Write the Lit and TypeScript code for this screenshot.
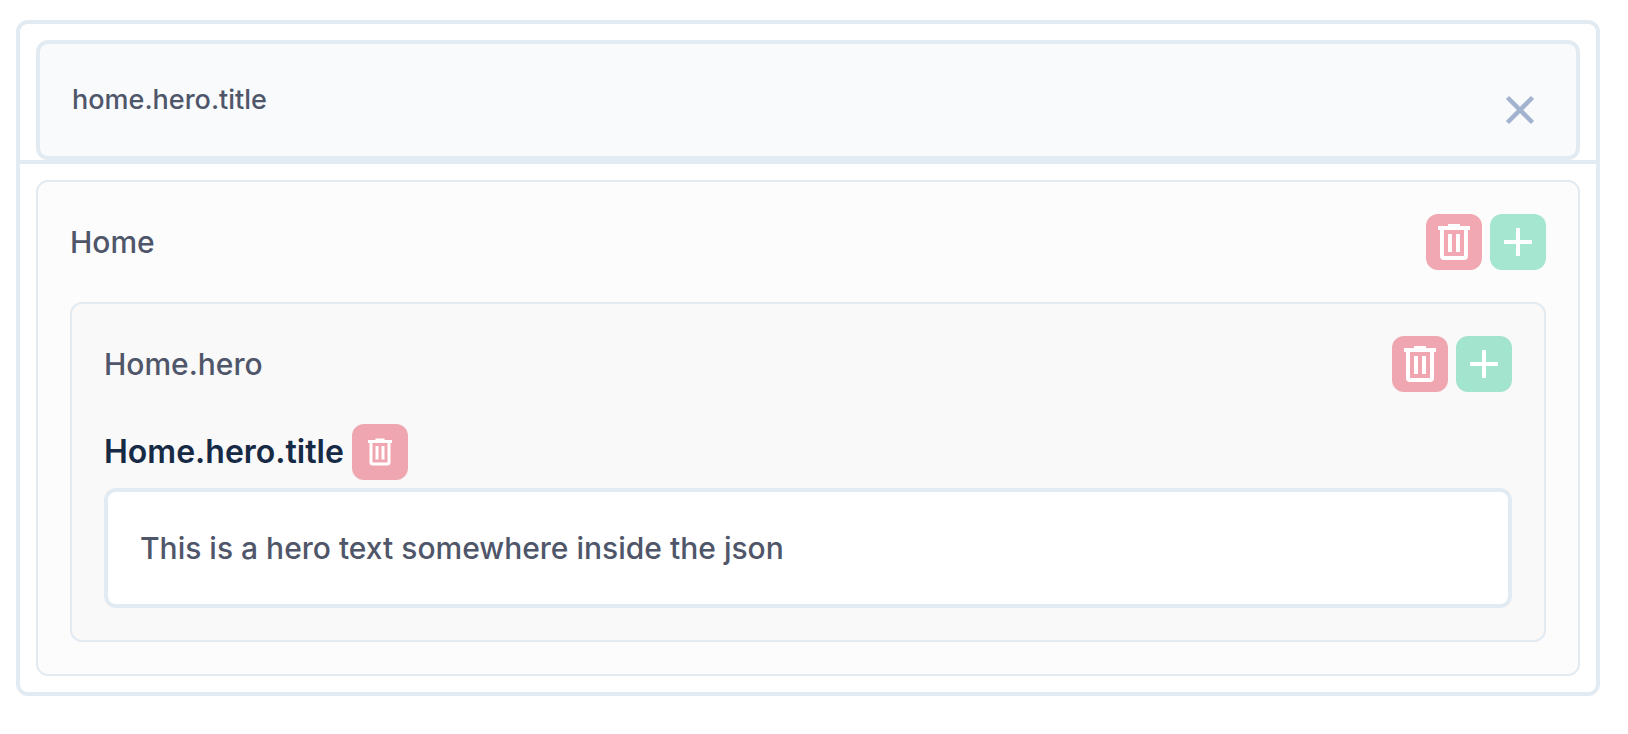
import { LitElement, html, svg, css, nothing } from "lit";
import { customElement, property, state } from "lit/decorators.js";

const trashShape = svg`
  <path fill-rule="evenodd" d="M22 10h12v2h10v4h-2v26a4 4 0 0 1-4 4h-20a4 4 0 0 1-4-4v-26h-2v-4h10zM18 16v26h20v-26z" />
  <path d="M22 20h4v18h-4zM30 20h4v18h-4z" />
`;

@customElement("icon-button")
class IconButton extends LitElement {
  @property() kind = "delete";
  @property() label = "";
  @property({ type: Boolean }) small = false;

  static styles = css`
    :host {
      display: block;
      flex: none;
    }
    .button {
      display: block;
      width: 56px;
      height: 56px;
      padding: 0;
      border: 0;
      border-radius: 12px;
      cursor: pointer;
      background: rgba(232, 84, 104, 0.5);
    }
    .add {
      background: rgba(75, 207, 164, 0.5);
    }
    .glyph {
      display: block;
      width: 56px;
      height: 56px;
      fill: #fff;
    }
  `;

  render() {
    const add = this.kind === "add";
    return html`<button class="button ${add ? "add" : ""}" type="button" aria-label=${this.label}>
      <svg class="glyph" viewBox="0 0 56 56" aria-hidden="true">
        ${add
          ? svg`<path d="M26 14h4v12h12v4h-12v12h-4v-12h-12v-4h12z" />`
          : this.small
            ? svg`<g transform="translate(7 7) scale(0.75)">${trashShape}</g>`
            : trashShape}
      </svg>
    </button>`;
  }
}

interface Leaf {
  path: string;
  value: string;
}

interface Group {
  path: string;
  groups: Group[];
  leaves: Leaf[];
}

const tree: Group = {
  path: "Home",
  leaves: [],
  groups: [
    {
      path: "Home.hero",
      groups: [],
      leaves: [{ path: "Home.hero.title", value: "This is a hero text somewhere inside the json" }],
    },
  ],
};

@customElement("app-root")
class AppRoot extends LitElement {
  @state() query = "home.hero.title";

  static styles = css`
    :host {
      display: block;
      padding: 20px 28px 20px 16px;
      font-family: Inter, sans-serif;
      font-size: 30px;
      line-height: 40px;
      font-weight: 500;
      color: #4f566a;
    }
    .panel {
      border: 4px solid #e2eaf2;
      border-radius: 12px;
      background: #fff;
    }
    .search {
      position: relative;
      padding: 16px 16px 0;
      border-bottom: 4px solid #e2eaf2;
    }
    .field {
      display: block;
      box-sizing: border-box;
      width: 100%;
      padding: 36px 32px;
      border: 4px solid #e2eaf2;
      border-radius: 12px;
      background: #fff;
      font: inherit;
      color: inherit;
      outline: none;
    }
    .query {
      padding-right: 96px;
      background: #f9fafc;
      font-size: 27px;
    }
    .clear {
      position: absolute;
      right: 48px;
      bottom: 22px;
      width: 56px;
      height: 56px;
      padding: 0;
      border: 0;
      background: none;
      cursor: pointer;
    }
    .cross {
      display: block;
      fill: none;
      stroke: #a3b3cf;
      stroke-width: 4.5;
    }
    .tree {
      padding: 16px;
    }
    .group {
      display: flex;
      flex-direction: column;
      gap: 32px;
      padding: 32px;
      border: 2px solid #e2eaf2;
      border-radius: 12px;
      background: rgba(0, 0, 0, 0.01);
    }
    .row {
      display: flex;
      align-items: center;
      gap: 8px;
    }
    .name {
      flex: 1;
      min-width: 0;
    }
    .leaf {
      display: flex;
      flex-direction: column;
      gap: 8px;
    }
    .label {
      font-weight: 600;
      font-size: 32px;
      color: #172a45;
    }
  `;

  renderLeaf(leaf: Leaf) {
    return html`<div class="leaf">
      <div class="row">
        <label class="label" for=${leaf.path}>${leaf.path}</label>
        <icon-button small label="Delete ${leaf.path}"></icon-button>
      </div>
      <input class="field" id=${leaf.path} type="text" .value=${leaf.value} />
    </div>`;
  }

  renderGroup(group: Group): unknown {
    return html`<section class="group">
      <div class="row">
        <span class="name">${group.path}</span>
        <icon-button label="Delete ${group.path}"></icon-button>
        <icon-button kind="add" label="Add to ${group.path}"></icon-button>
      </div>
      ${group.groups.map((g) => this.renderGroup(g))} ${group.leaves.map((l) => this.renderLeaf(l))}
    </section>`;
  }

  render() {
    return html`<main class="panel">
      <div class="search">
        <input
          class="field query"
          type="text"
          aria-label="Search keys"
          .value=${this.query}
          @input=${(e: Event) => (this.query = (e.target as HTMLInputElement).value)}
        />
        ${this.query
          ? html`<button class="clear" type="button" aria-label="Clear search" @click=${() => (this.query = "")}>
              <svg class="cross" width="56" height="56" viewBox="0 0 56 56" aria-hidden="true">
                <path d="M15.5 15.5l25 25M40.5 15.5l-25 25" />
              </svg>
            </button>`
          : nothing}
      </div>
      <div class="tree">${this.renderGroup(tree)}</div>
    </main>`;
  }
}
